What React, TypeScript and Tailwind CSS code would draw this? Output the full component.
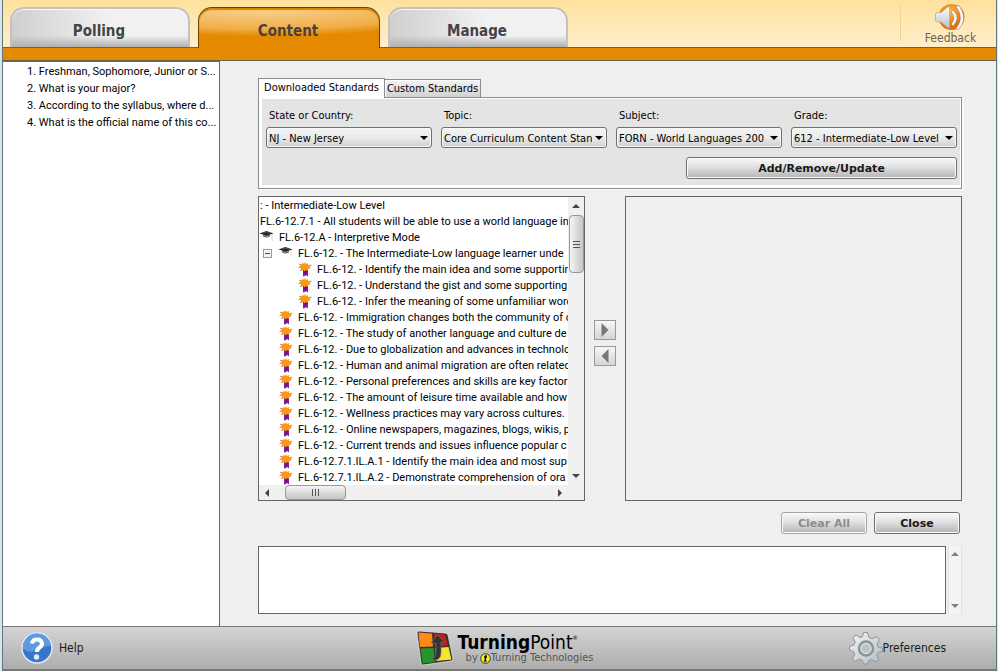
import type { ReactNode } from "react";

const standards: { kind: "text" | "cap" | "medal"; level: 0 | 1 | 2 | 3; text: string; open?: boolean }[] = [
  { kind: "text", level: 0, text: ": - Intermediate-Low Level" },
  { kind: "text", level: 0, text: "FL.6-12.7.1 - All students will be able to use a world language in" },
  { kind: "cap", level: 1, text: "FL.6-12.A - Interpretive Mode" },
  { kind: "cap", level: 2, open: true, text: "FL.6-12. - The Intermediate-Low language learner unde" },
  { kind: "medal", level: 3, text: "FL.6-12. - Identify the main idea and some supportin" },
  { kind: "medal", level: 3, text: "FL.6-12. - Understand the gist and some supporting" },
  { kind: "medal", level: 3, text: "FL.6-12. - Infer the meaning of some unfamiliar word" },
  { kind: "medal", level: 2, text: "FL.6-12. - Immigration changes both the community of o" },
  { kind: "medal", level: 2, text: "FL.6-12. - The study of another language and culture de" },
  { kind: "medal", level: 2, text: "FL.6-12. - Due to globalization and advances in technolo" },
  { kind: "medal", level: 2, text: "FL.6-12. - Human and animal migration are often related" },
  { kind: "medal", level: 2, text: "FL.6-12. - Personal preferences and skills are key factor" },
  { kind: "medal", level: 2, text: "FL.6-12. - The amount of leisure time available and how" },
  { kind: "medal", level: 2, text: "FL.6-12. - Wellness practices may vary across cultures." },
  { kind: "medal", level: 2, text: "FL.6-12. - Online newspapers, magazines, blogs, wikis, p" },
  { kind: "medal", level: 2, text: "FL.6-12. - Current trends and issues influence popular c" },
  { kind: "medal", level: 2, text: "FL.6-12.7.1.IL.A.1 - Identify the main idea and most sup" },
  { kind: "medal", level: 2, text: "FL.6-12.7.1.IL.A.2 - Demonstrate comprehension of ora" },
];

const indent = { 0: "pl-px", 1: "", 2: "pl-1", 3: "pl-[38px]" };

const questions = [
  "Freshman, Sophomore, Junior or S...",
  "What is your major?",
  "According to the syllabus, where d...",
  "What is the official name of this co...",
];

const filters = [
  { id: "state", label: "State or Country:", value: "NJ - New Jersey" },
  { id: "topic", label: "Topic:", value: "Core Curriculum Content Stan" },
  { id: "subject", label: "Subject:", value: "FORN - World Languages 200" },
  { id: "grade", label: "Grade:", value: "612 - Intermediate-Low Level" },
];

function CapIcon() {
  return (
    <svg width="16" height="16" viewBox="0 0 16 16" className="shrink-0" aria-hidden="true">
      <path d="M4 5v2.500q3.500 2 7 0V5z" fill="#777" />
      <path d="M.5 4.500 7.500 2 14.500 4.500 7.500 6.500z" fill="#222" />
      <path d="M4 4.300 7.500 3l4 1.500" fill="none" stroke="#777" strokeWidth=".6" />
      <path d="M13 5v7" stroke="#e3d2c8" strokeWidth="1" />
    </svg>
  );
}

function MedalIcon() {
  return (
    <svg width="16" height="16" viewBox="0 0 16 16" className="shrink-0" aria-hidden="true">
      <path d="M6 8h5v7.500L9 14l-1 1-2 .5z" fill="#8a1a9a" />
      <path d="M8.500 9v4" stroke="#4c0b66" />
      <path
        d="m8 1 1 2 2-1 .2 2.200L14 4l-1.500 1.800L14 7l-2.500.8L11 9.500l-2-.3-1.500 1L6.500 9l-3 .5.8-2L2 6.500 4 5.300 2.500 3.200 5 3.500 5.500 1.500 7 3z"
        fill="#ff980c"
      />
      <path d="m2 3.200 2.500.7M1.500 6.500l2.500-.7M3 9.700l2-1M14.500 4l-2.500 1" stroke="#b96a16" strokeWidth=".7" />
    </svg>
  );
}

function Triangle({ dir, color = "#444", size = 8 }: { dir: "up" | "down" | "left" | "right"; color?: string; size?: number }) {
  const paths = { up: "M0 6 4 2l4 4z", down: "M0 2h8L4 6z", left: "M6 0v8L2 4z", right: "M2 0v8l4-4z" };
  return (
    <svg width={size} height={size} viewBox="0 0 8 8" aria-hidden="true">
      <path d={paths[dir]} fill={color} />
    </svg>
  );
}

function PushButton({ children, disabled, className }: { children: ReactNode; disabled?: boolean; className: string }) {
  return (
    <button
      type="button"
      disabled={disabled}
      className={`h-[22px] rounded-[3px] border border-[#707070] bg-linear-to-b from-[#f4f4f4] from-10% via-[#e0e0e0] via-45% to-[#b4b4b4] pt-0.5 text-center font-['DejaVu_Sans','Open_Sans',sans-serif] text-[11px] leading-[18px] font-bold text-[#1a1a1a] shadow-[inset_0_0_0_1px_#fafafa] disabled:border-[#a5a5a5] disabled:text-[#8d8d8d] ${className}`}
    >
      {children}
    </button>
  );
}

function GreyTab({ children }: { children: ReactNode }) {
  return (
    <button
      type="button"
      role="tab"
      aria-selected="false"
      className="h-10 w-[180px] rounded-t-[14px] border-2 border-b-0 border-[#c2c2c2] bg-[linear-gradient(to_top,#b0b0b0_0%,#b0b0b000_30%),linear-gradient(to_right,#cfcfcf,#f1f1f1_55%)] pt-1.5 pr-0.5 text-[15px] font-bold text-[#444] shadow-[inset_0_1px_0_#fafafa]"
    >
      {children}
    </button>
  );
}

function Header() {
  return (
    <header className="flex h-12 items-end border-b border-[#6b6250] bg-linear-to-b from-[#fee19c] to-[#ffeecb] font-['DejaVu_Sans_Condensed','Open_Sans',sans-serif]">
      <div role="tablist" className="flex items-end gap-2 pl-[7px]">
        <GreyTab>Polling</GreyTab>
        <button
          type="button"
          role="tab"
          aria-selected="true"
          className="relative -mb-px h-[41px] w-[182px] rounded-t-[14px] border border-b-0 border-[#6b4306] bg-[radial-gradient(ellipse_120%_70%_at_35%_0%,#f9d494_0%,#f0ae48_75%,#e58a00_100%)] pt-1.5 pr-0.5 text-[15px] font-bold text-[#4a4237] shadow-[inset_0_2px_1px_#d98200]"
        >
          Content
        </button>
        <GreyTab>Manage</GreyTab>
      </div>
      <div className="mb-1.5 ml-auto flex h-9 w-24 items-center justify-center border-l border-[#efd48b]">
        <button type="button" className="flex flex-col items-center pl-1 text-xs leading-3 text-[#6a6252]">
          <svg width="32" height="29" viewBox="0 0 32 29" aria-hidden="true">
            <defs>
              <radialGradient id="sun" cx=".45" cy=".3">
                <stop offset="0" stopColor="#ffbd45" />
                <stop offset="1" stopColor="#e66f08" />
              </radialGradient>
              <linearGradient id="horn" x2="0" y2="1">
                <stop offset="0" stopColor="#fff" />
                <stop offset="1" stopColor="#b9bec7" />
              </linearGradient>
            </defs>
            <circle cx="17.500" cy="14" r="13" fill="url(#sun)" />
            <path d="M1.500 11q0-1.500 2-1.500H7L14 4q1.500-1 1.500 1v19q0 2-1.500 1l-7-6H3.500q-2 0-2-1.500z" fill="url(#horn)" stroke="#bba98e" strokeWidth=".7" />
            <path d="M19 9q5 6 0 12M24 4q8 11 0 21" fill="none" stroke="#9c8c7b" strokeWidth="3.600" strokeLinecap="round" />
            <path d="M19 9q5 6 0 12M24 4q8 11 0 21" fill="none" stroke="#f6f4f2" strokeWidth="2.600" strokeLinecap="round" />
          </svg>
          Feedback
        </button>
      </div>
    </header>
  );
}

function StandardsPanel() {
  return (
    <section>
      <div role="tablist" className="flex items-end">
        <button type="button" role="tab" aria-selected="true" className="relative -mb-px h-5 w-[127px] border border-b-0 border-[#8b8b93] bg-white text-center">
          Downloaded Standards
        </button>
        <button type="button" role="tab" aria-selected="false" className="h-[18px] w-24 border border-b-0 border-l-0 border-[#8b8b93] bg-linear-to-b from-[#f3f3f3] to-[#d2d2d2] pt-px text-center leading-4 shadow-[inset_1px_1px_0_#fff]">
          Custom Standards
        </button>
      </div>
      <div className="border border-[#8b8b93] bg-white p-[3px] pt-px pr-px shadow-[2px_1px_0_#fafafa]">
        <div className="grid grid-cols-4 gap-x-[9px] bg-[#e4e4e4] pt-[9px] pr-[3px] pb-1.5 pl-1">
          {filters.map((f) => (
            <div key={f.id} className="flex min-w-0 flex-col">
              <label htmlFor={f.id} className="pb-[3px] pl-[3px] leading-4">
                {f.label}
              </label>
              <div className="relative">
                <select
                  id={f.id}
                  className="block h-[21px] w-full appearance-none rounded-[3px] border border-[#707070] bg-linear-to-b from-[#f4f4f4] via-[#ebebeb] via-50% to-[#cfcfcf] pt-0.5 pr-3.5 pl-0.5 leading-4 shadow-[inset_0_0_0_1px_#f8f8f8]"
                >
                  <option>{f.value}</option>
                </select>
                <span className="pointer-events-none absolute inset-y-0 right-1 flex items-center">
                  <Triangle dir="down" color="#000" />
                </span>
              </div>
            </div>
          ))}
          <PushButton className="col-span-4 mt-[9px] w-[271px] justify-self-end">Add/Remove/Update</PushButton>
        </div>
      </div>
    </section>
  );
}

function StandardsTree() {
  return (
    <div className="grid min-w-0 grid-cols-[minmax(0,1fr)_16px] grid-rows-[1fr_15px] border border-[#666] bg-white">
      <ul className="overflow-hidden font-['Roboto','Liberation_Sans',sans-serif]">
        {standards.map((row) => (
          <li key={row.text} className={`flex h-4 items-center leading-[14px] whitespace-nowrap ${indent[row.level]}`}>
            {row.level === 2 && (
              <span className="mr-1.5 flex w-[9px] shrink-0">
                {row.open && (
                  <button type="button" aria-label="Collapse" className="flex size-[9px] items-center justify-center border border-[#999] bg-[#f2f2f2]">
                    <span className="h-px w-[5px] bg-[#334c99]" />
                  </button>
                )}
              </span>
            )}
            {row.kind === "cap" && <CapIcon />}
            {row.kind === "medal" && <MedalIcon />}
            <span className={row.kind === "text" ? "pt-0.5" : "pt-0.5 pl-1"}>{row.text}</span>
          </li>
        ))}
      </ul>
      <div className="flex flex-col items-center bg-[#f0f0f0]">
        <span className="flex h-[18px] items-center">
          <Triangle dir="up" />
        </span>
        <span className="flex h-[58px] w-[15px] flex-col items-center justify-center gap-0.5 rounded-sm border border-[#999] bg-linear-to-r from-[#f5f5f5] to-[#c5c5c5]">
          <i className="h-px w-[7px] bg-[#555]" />
          <i className="h-px w-[7px] bg-[#555]" />
          <i className="h-px w-[7px] bg-[#555]" />
        </span>
        <span className="mt-auto flex h-[18px] items-center">
          <Triangle dir="down" />
        </span>
      </div>
      <div className="flex items-center bg-[#f0f0f0]">
        <span className="flex w-[26px] pl-1">
          <Triangle dir="left" />
        </span>
        <span className="flex h-[15px] w-[61px] items-center justify-center gap-0.5 rounded-sm border border-[#999] bg-linear-to-b from-[#f5f5f5] to-[#c5c5c5]">
          <i className="h-[7px] w-px bg-[#555]" />
          <i className="h-[7px] w-px bg-[#555]" />
          <i className="h-[7px] w-px bg-[#555]" />
        </span>
        <span className="ml-auto pr-1">
          <Triangle dir="right" />
        </span>
      </div>
      <div className="bg-[#f0f0f0]" />
    </div>
  );
}

function MoveButton({ dir, label }: { dir: "left" | "right"; label: string }) {
  return (
    <button type="button" aria-label={label} className="flex h-5 w-[22px] items-center justify-center border border-[#999] bg-linear-to-b from-[#f6f6f6] to-[#d5d5d5]">
      <Triangle dir={dir} color="#777" size={14} />
    </button>
  );
}

function Footer() {
  return (
    <footer className="grid h-[45px] grid-cols-[1fr_auto_1fr] items-center border-t border-b-2 border-[#777] bg-linear-to-b from-[#d4d4d4] to-[#adadad] font-['DejaVu_Sans_Condensed','Open_Sans',sans-serif] text-xs text-[#1a1a22]">
      <button type="button" className="flex items-center gap-1.5 justify-self-start pl-[18px]">
        <svg width="32" height="32" viewBox="0 0 32 32" aria-hidden="true">
          <circle cx="16" cy="16" r="15" fill="#3a76c8" stroke="#dfe8f3" strokeWidth="1.500" />
          <path d="M2 17a14 14 0 0 1 28-3Q22 14 16 18T2 17z" fill="#5f9ae0" />
          <path d="M11 11.500Q11.500 7.500 16 7.500t5 4q0 2.500-2.500 4T16 20" fill="none" stroke="#fff" strokeWidth="4" />
          <circle cx="15.500" cy="25" r="2.700" fill="#e6ecf5" />
        </svg>
        Help
      </button>
      <div className="flex items-center gap-1 pl-2.5">
        <svg width="38" height="36" viewBox="0 0 38 36" aria-hidden="true">
          <path d="M1 3q0-2 2-2l26 2q2 0 3 2l5 24q0 2-2 2L7 35q-2 0-2-2z" fill="#333" stroke="#eee" strokeWidth=".7" />
          <path d="M2.500 2.500 16 3.500l1 13-13 .5z" fill="#ff8a16" />
          <path d="m18 3.500 11 1 3 11-13 1z" fill="#c51d1d" />
          <path d="m4.500 18.500 13-.5 1.500 14-12.500 1.500z" fill="#259429" />
          <path d="m19.500 18 13-1 3 12.500-15 1.500z" fill="#f5e531" />
          <path d="M16 27q4 2 4-4V13h-5l6.500-8 7.500 7h-4v10q0 8-6 8-3 0-3-3z" fill="#333" stroke="#777" strokeWidth=".6" />
        </svg>
        <div className="flex flex-col">
          <div className="flex text-[19px] leading-5 text-black">
            <span className="font-bold">Turning</span>
            <span>Point</span>
            <span className="text-[6px] leading-3">®</span>
          </div>
          <div className="flex items-center pl-2 text-[11px] leading-3 text-[#555]">
            by
            <svg width="11" height="11" viewBox="0 0 11 11" className="ml-0.5" aria-hidden="true">
              <circle cx="5.500" cy="5.500" r="4.800" fill="#f7ee31" stroke="#333" />
              <path d="M6 2 5 8h1.500M4 4h3" fill="none" stroke="#111" strokeWidth="1.500" />
            </svg>
            Turning Technologies
          </div>
        </div>
      </div>
      <button type="button" className="flex items-center justify-self-end pr-[50px]">
        <svg width="34" height="34" viewBox="0 0 34 34" aria-hidden="true">
          <defs>
            <linearGradient id="gear" x2="1" y2="1">
              <stop offset="0" stopColor="#f2f6f7" />
              <stop offset="1" stopColor="#b4bcc0" />
            </linearGradient>
          </defs>
          <path
            d="m14.500 1.500 4 0 1.500 5 3 1.200L28 5.500l2.500 3L28 13l1 3 4.500 1.200v3L29 21.500l-1.200 3 2.200 4-3 2.500-4.200-2.500-3 1.200-1.300 3.300h-4l-1.300-3.500-3-1.200L6 30.500 3.500 28l2.200-4.500-1.200-3L.5 19v-3.500L5 14l1.200-3L4 7l3-3 4 2.500L13.500 5.500z"
            fill="url(#gear)"
            stroke="#8d9599"
          />
          <circle cx="17" cy="17.500" r="7" fill="#bfc2c4" stroke="#8a9397" strokeWidth="2.500" />
          <circle cx="17" cy="17.500" r="5" fill="none" stroke="#e9eced" />
        </svg>
        Preferences
      </button>
    </footer>
  );
}

export default function App() {
  return (
    <div className="flex min-h-screen flex-col bg-[#dbe5e7] pr-px pl-0.5 font-['DejaVu_Sans_Condensed','Open_Sans',sans-serif] text-[11px] text-black">
      <div className="flex flex-1 flex-col border-x border-[#60777c] bg-[#efefef]">
        <Header />
        <div className="h-[13px] border-b border-[#6b6250] bg-[#e58a00]" />
        <div className="flex flex-1">
          <aside className="w-[217px] shrink-0 border-t border-r border-[#666] bg-white">
            <ol className="pt-px pl-6 font-['Roboto','Liberation_Sans',sans-serif] leading-[17px]">
              {questions.map((q, i) => (
                <li key={q} className="whitespace-nowrap">
                  {i + 1}. {q}
                </li>
              ))}
            </ol>
          </aside>
          <main className="flex min-w-0 flex-1 flex-col pt-[17px] pr-[34px] pb-3 pl-[38px]">
            <StandardsPanel />
            <div className="mt-[7px] grid flex-1 grid-cols-[327fr_22px_337fr] gap-[9px]">
              <StandardsTree />
              <div className="flex flex-col justify-center gap-1.5 pb-3">
                <MoveButton dir="right" label="Add standard" />
                <MoveButton dir="left" label="Remove standard" />
              </div>
              <ul aria-label="Selected standards" className="border border-[#666]" />
            </div>
            <div className="mt-[11px] flex justify-end gap-[7px] pr-0.5">
              <PushButton disabled className="w-[86px]">
                Clear All
              </PushButton>
              <PushButton className="w-[86px]">Close</PushButton>
            </div>
            <div className="mt-3 flex gap-0.5">
              <textarea aria-label="Description" className="block h-[68px] min-w-0 flex-1 resize-none overflow-hidden border border-[#666] bg-white p-1" />
              <div className="flex w-3.5 flex-col items-center justify-between border-x border-[#e2e2e2] bg-[#f3f3f3] py-1">
                <Triangle dir="up" color="#808080" />
                <Triangle dir="down" color="#808080" />
              </div>
            </div>
          </main>
        </div>
        <Footer />
      </div>
    </div>
  );
}
